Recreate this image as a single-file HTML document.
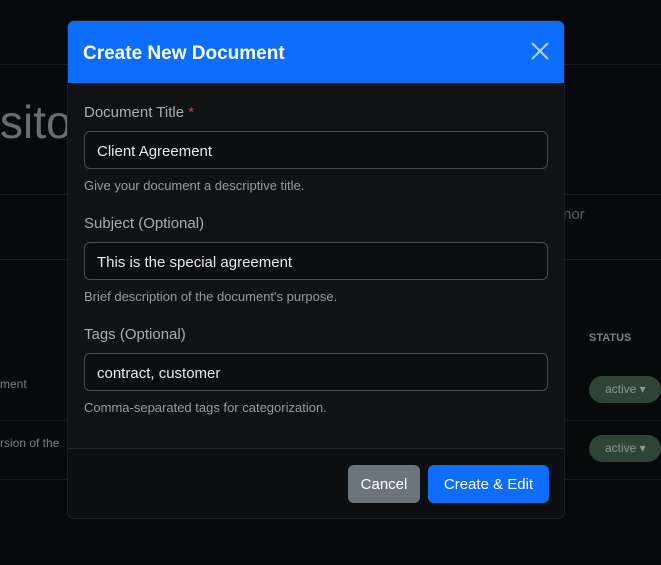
<!DOCTYPE html>
<html><head><style>
*{box-sizing:border-box;margin:0;padding:0}
body{width:661px;height:565px;overflow:hidden;background:#08090a;font-family:"Liberation Sans",sans-serif;position:relative}
.line{position:absolute;left:0;right:0;height:1px;background:#1c1e21}
.modal{position:absolute;left:67px;top:20px;width:498px;height:499px;background:#111214;border-radius:7px;overflow:hidden;border:1px solid #1c1e21}
.hd{height:62px;background:#0d6efd;display:flex;align-items:center;padding-left:15px;padding-top:3px;color:#fff;font-weight:bold;font-size:19px}
.x{position:absolute;right:15px;top:21px}
.body{padding:0 16px}
label{display:block;color:#a9adb2;font-size:15px;margin-top:22px;line-height:18px}
label:first-child{margin-top:21px}
.in{margin-top:9px;height:38px;border:1px solid #4a4d52;border-radius:6px;padding-left:12px;padding-top:2px;line-height:36px;color:#e8e9ea;font-size:15px;background:#0c0d0f}
.help{color:#979ba0;font-size:13px;margin-top:9px;line-height:15px}
.ft{position:absolute;left:0;right:0;top:427px;border-top:1px solid #25272b;height:72px;background:#0e0f11}
.btn{position:absolute;top:16px;height:38px;border-radius:6px;color:#fff;font-size:15px;line-height:40px;text-align:center}
.pill{position:absolute;left:589px;width:72px;height:27px;border-radius:14px;background:#2e4535;color:#8c9a90;font-size:12px;line-height:27px;padding-left:16px}
</style></head><body>
<div class="line" style="top:64px"></div>
<div class="line" style="top:194px"></div>
<div class="line" style="top:259px"></div>
<div class="line" style="top:420px;background:#16181a"></div>
<div class="line" style="top:479px;background:#16181a"></div>
<div style="position:absolute;left:0;top:95px;font-size:46px;color:#6a6d71">sito</div>
<div style="position:absolute;left:563px;top:206px;font-size:15px;color:#5a5d61">nor</div>
<div style="position:absolute;left:589px;top:332px;font-size:11px;font-weight:bold;color:#7a7e83">STATUS</div>
<div style="position:absolute;left:0;top:377px;font-size:12px;color:#7a7e83">ment</div>
<div style="position:absolute;left:0;top:436px;font-size:12px;color:#7a7e83">rsion of the</div>
<div class="pill" style="top:376px">active ▾</div>
<div class="pill" style="top:435px">active ▾</div>
<div class="modal">
<div class="hd">Create New Document</div>
<svg class="x" width="18" height="18" viewBox="0 0 18 18"><path d="M1 1L17 17M17 1L1 17" stroke="#b6cdf5" stroke-width="2"/></svg>
<div class="body">
<label>Document Title <span style="color:#dc3545">*</span></label>
<div class="in">Client Agreement</div>
<div class="help">Give your document a descriptive title.</div>
<label>Subject (Optional)</label>
<div class="in">This is the special agreement</div>
<div class="help">Brief description of the document's purpose.</div>
<label>Tags (Optional)</label>
<div class="in">contract, customer</div>
<div class="help">Comma-separated tags for categorization.</div>
</div>
<div class="ft">
<div class="btn" style="left:280px;width:72px;background:#6c757d">Cancel</div>
<div class="btn" style="left:360px;width:121px;background:#0d6efd">Create &amp; Edit</div>
</div>
</div>
</body></html>
